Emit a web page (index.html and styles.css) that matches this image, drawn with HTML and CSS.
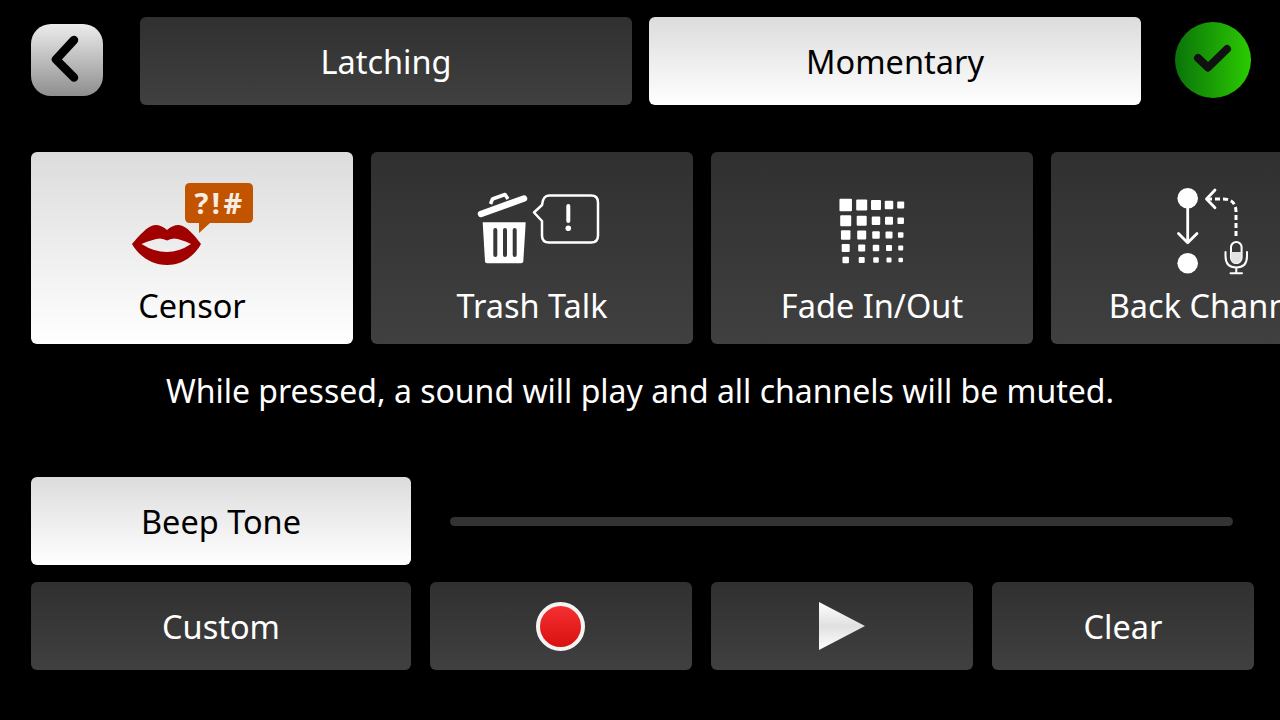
FILE: index.html
```html
<!DOCTYPE html>
<html lang="en">

<head>
    <meta charset="UTF-8">
    <meta name="viewport" content="width=device-width, initial-scale=1.0">
    <link rel="stylesheet" href="styles.css">
    <title>Censor button</title>
</head>

<body>
    <header class="top-row">
        <button class="back-button">
            <svg width="72" height="72" viewBox="0 0 72 72">
                <path d="M43 16 L25 35.500 L43 53.500" fill="none" stroke="#000" stroke-width="8.500" stroke-linecap="round" stroke-linejoin="round" />
            </svg>
        </button>
        <div class="mode-tabs">
            <button class="btn btn-dark">Latching</button>
            <button class="btn btn-light">Momentary</button>
        </div>
        <button class="confirm-button">
            <svg width="76" height="76" viewBox="0 0 76 76">
                <path d="M23 36 L33 45.500 L52 27" fill="none" stroke="#111" stroke-width="8" stroke-linecap="round" stroke-linejoin="round" />
            </svg>
        </button>
    </header>

    <section class="tile-row">
        <button class="btn tile btn-light">
            <svg class="tile-icon" width="130" height="90" viewBox="0 0 130 90">
                <path d="M58 8 Q58 3 63 3 H121 Q126 3 126 8 V38 Q126 43 121 43 H83 L72 53 V43 H63 Q58 43 58 38 Z" fill="#c25400" />
                <text class="bubble-text" x="93" y="33.500" text-anchor="middle">?!#</text>
                <path fill-rule="evenodd" fill="#a00000" d="M5 64 C12 56 20 46 28 45 C33 45 37 47 40 50 C43 47 47 45 52 45 C60 46 68 56 74 64 C68 75 56 85 40 85 C24 85 11 75 5 64 Z M14.500 64 Q26 59 33 58.500 Q37 59 40 60.500 Q43 59 47 58.500 Q54 59 64 64 Q52 72 40 72 Q27 72 14.500 64 Z" />
            </svg>
            <span>Censor</span>
        </button>
        <button class="btn tile btn-dark">
            <svg class="tile-icon" width="130" height="90" viewBox="0 0 130 90">
                <path d="M14 34 L57 18.500" stroke="#fff" stroke-width="6.500" stroke-linecap="round" />
                <path d="M23.500 24 L25.500 19 L38 14.500 L41 19" fill="none" stroke="#fff" stroke-width="3.500" stroke-linejoin="round" />
                <path d="M15.700 42.300 H58.700 L56.300 81.500 Q56 83.300 54 83.300 H20 Q18.300 83.300 18 81.500 Z" fill="#fff" />
                <path d="M28.300 50 V75 M38 50 V75 M47.700 50 V75" stroke="#383838" stroke-width="4" stroke-linecap="round" />
                <path d="M82 15.500 H124 Q131 15.500 131 22.500 V55.500 Q131 62.500 124 62.500 H82 Q75 62.500 75 55.500 V41 L67 32.500 L75 25 Q76 15.500 82 15.500 Z" fill="none" stroke="#fff" stroke-width="2.500" stroke-linejoin="round" />
                <path d="M101.300 26 V41" stroke="#fff" stroke-width="4" stroke-linecap="round" />
                <circle cx="101.300" cy="48.300" r="2.800" fill="#fff" />
            </svg>
            <span>Trash Talk</span>
        </button>
        <button class="btn tile btn-dark">
            <svg class="tile-icon" width="130" height="90" viewBox="0 0 130 90" fill="#fff">
                <rect x="32.450" y="18.750" width="12.500" height="12.500" rx="1" />
                <rect x="49.200" y="19.500" width="11" height="11" rx="1" />
                <rect x="64" y="20" width="10" height="10" rx="1" />
                <rect x="77.750" y="20.750" width="8.500" height="8.500" rx="1" />
                <rect x="90.200" y="21.500" width="7" height="7" rx="1" />
                <rect x="33.200" y="35.200" width="11" height="11" rx="1" />
                <rect x="49.700" y="35.700" width="10" height="10" rx="1" />
                <rect x="64.750" y="36.450" width="8.500" height="8.500" rx="1" />
                <rect x="78" y="36.700" width="8" height="8" rx="1" />
                <rect x="90.450" y="37.450" width="6.500" height="6.500" rx="1" />
                <rect x="33.950" y="50.250" width="9.500" height="9.500" rx="1" />
                <rect x="50.200" y="50.500" width="9" height="9" rx="1" />
                <rect x="65.250" y="51.250" width="7.500" height="7.500" rx="1" />
                <rect x="78.500" y="51.500" width="7" height="7" rx="1" />
                <rect x="90.950" y="52.250" width="5.500" height="5.500" rx="1" />
                <rect x="34.700" y="64" width="8" height="8" rx="1" />
                <rect x="51.200" y="64.500" width="7" height="7" rx="1" />
                <rect x="65.750" y="64.750" width="6.500" height="6.500" rx="1" />
                <rect x="79" y="65" width="6" height="6" rx="1" />
                <rect x="91.200" y="65.500" width="5" height="5" rx="1" />
                <rect x="35.450" y="76.750" width="6.500" height="6.500" rx="1" />
                <rect x="51.700" y="77" width="6" height="6" rx="1" />
                <rect x="66.250" y="77.250" width="5.500" height="5.500" rx="1" />
                <rect x="79.500" y="77.500" width="5" height="5" rx="1" />
                <rect x="91.450" y="77.750" width="4.500" height="4.500" rx="1" />
            </svg>
            <span>Fade In/Out</span>
        </button>
        <button class="btn tile btn-dark">
            <svg class="tile-icon" width="130" height="90" viewBox="0 0 130 90" fill="none" stroke="#fff">
                <circle cx="40.700" cy="18.300" r="10.300" fill="#fff" stroke="none" />
                <circle cx="40.700" cy="83.300" r="10.300" fill="#fff" stroke="none" />
                <path d="M40.700 28 V62 M31.500 53.500 L40.700 62.700 L50 53.500" stroke-width="2.800" stroke-linecap="round" stroke-linejoin="round" />
                <path d="M68 10 L59.500 19 L68 27.700" stroke-width="2.800" stroke-linecap="round" stroke-linejoin="round" />
                <path d="M60 19 H76 Q89 19 89 32 V58" stroke-width="3" stroke-dasharray="5 3" />
                <rect x="84" y="62" width="10.600" height="21" rx="5.300" stroke-width="2" />
                <path d="M84 72 H94.600 V78 Q94.600 83 89.300 83 Q84 83 84 78 Z" fill="#e4e4e4" stroke="none" />
                <path d="M78.500 72 V76 Q78.500 87.500 89.300 87.500 Q100 87.500 100 76 V72 M89.300 87.500 V93 M83.500 93.300 H95" stroke-width="2" stroke-linecap="round" />
            </svg>
            <span>Back Channel</span>
        </button>
    </section>

    <p class="description">While pressed, a sound will play and all channels will be muted.</p>

    <section class="sound-row">
        <button class="btn btn-light sound-button">Beep Tone</button>
        <div class="progress-track"></div>
    </section>

    <section class="control-row">
        <button class="btn btn-dark sound-button">Custom</button>
        <button class="btn btn-dark control-button"><span class="record-dot"></span></button>
        <button class="btn btn-dark control-button"><span class="play-icon"></span></button>
        <button class="btn btn-dark control-button">Clear</button>
    </section>
</body>

</html>
```

FILE: styles.css
```css
html, body {
    height: 100%;
}

body {
    margin: 0;
    width: 1280px;
    height: 720px;
    overflow: hidden;
    background-color: #000;
    font-family: "Noto Sans", sans-serif;
    color: #fff;
}

button {
    font: inherit;
    border: none;
    padding: 0;
}

.btn {
    display: flex;
    align-items: center;
    justify-content: center;
    border-radius: 6px;
    font-size: 32.500px;
    height: 88px;
    flex-shrink: 0;
}

.btn-dark {
    background: linear-gradient(#303030, #404040);
    color: #fff;
}

.btn-light {
    background: linear-gradient(#dcdcdc, #ffffff);
    color: #000;
}

.top-row {
    display: flex;
    align-items: center;
    height: 88px;
    margin: 17px 0 0 31px;
}

.back-button {
    width: 72px;
    height: 72px;
    margin-top: -2px;
    border-radius: 20px;
    background: linear-gradient(#ececec, #8e8e8e);
}

.back-button svg,
.confirm-button svg {
    display: block;
}

.mode-tabs {
    display: flex;
    gap: 17px;
    margin-left: 37px;
}

.mode-tabs .btn {
    width: 492px;
}

.confirm-button {
    width: 76px;
    height: 76px;
    margin: -2px 0 0 34px;
    border-radius: 50%;
    background: linear-gradient(to right, #0a730a, #2bcb00);
}

.tile-row {
    display: flex;
    gap: 18px;
    margin: 47px 0 0 31px;
}

.tile {
    flex-direction: column;
    justify-content: flex-start;
    width: 322px;
    height: 192px;
}

.tile-icon {
    display: block;
    margin-top: 28px;
    overflow: visible;
}

.tile span {
    margin-top: 14px;
    line-height: 44px;
    white-space: nowrap;
}

.bubble-text {
    font-family: "Noto Sans", sans-serif;
    font-size: 29px;
    font-weight: 700;
    letter-spacing: 3.500px;
    fill: #f6ece4;
}

.description {
    margin: 25px 0 0;
    text-align: center;
    font-size: 32px;
    line-height: 44px;
}

.sound-row {
    display: flex;
    align-items: center;
    margin: 64px 0 0 31px;
}

.sound-button {
    width: 380px;
}

.progress-track {
    width: 783px;
    height: 9px;
    margin-left: 39px;
    border-radius: 5px;
    background-color: #333;
}

.control-row {
    display: flex;
    gap: 19px;
    margin: 17px 0 0 31px;
}

.control-button {
    width: 262px;
}

.record-dot {
    width: 41px;
    height: 41px;
    margin-left: -1px;
    border: 4px solid #f4f4f4;
    border-radius: 50%;
    background: linear-gradient(#f53030, #d81010);
}

.play-icon {
    width: 46px;
    height: 48px;
    clip-path: polygon(0 0, 100% 50%, 0 100%);
    background: linear-gradient(#ffffff, #e0e0e0 50%, #ffffff);
}
```
